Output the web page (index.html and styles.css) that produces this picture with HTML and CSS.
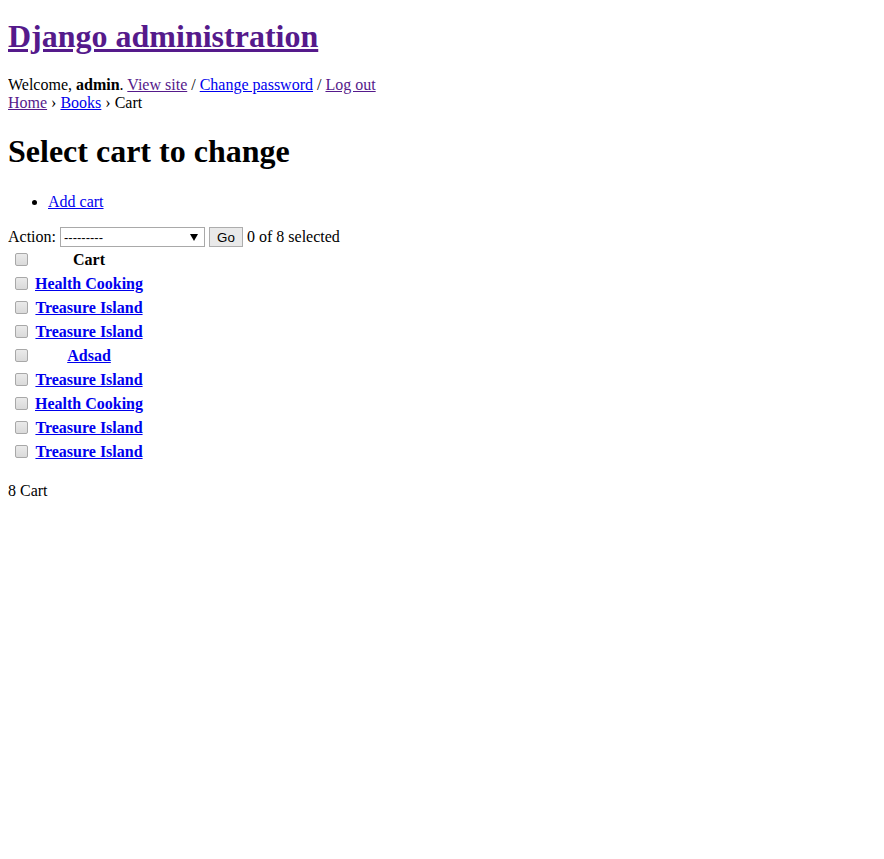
FILE: index.html
```html
<!DOCTYPE html>
<html lang="en">
<head>
<meta charset="utf-8">
<title>Select cart to change | Django site admin</title>
<link rel="stylesheet" href="styles.css">
</head>
<body class="page">
<div id="container">
  <div id="header">
    <div id="branding">
      <h1 id="site-name"><a class="visited" href="#admin">Django administration</a></h1>
    </div>
    <div id="user-tools">
      Welcome, <strong>admin</strong>. <a class="visited" href="#site">View site</a> / <a class="link" href="#pw">Change password</a> / <a class="visited" href="#logout">Log out</a>
    </div>
  </div>
  <div class="breadcrumbs">
    <a class="visited" href="#admin">Home</a> › <a class="link" href="#books">Books</a> › Cart
  </div>
  <div id="content">
    <h1 class="title">Select cart to change</h1>
    <div id="content-main">
      <ul class="object-tools"><li><a class="link" href="#add">Add cart</a></li></ul>
      <div class="module" id="changelist">
        <form id="changelist-form">
          <div class="actions">
            <label class="action-label">Action: <span class="select-wrap"><select class="action-select" name="action"><option value="" selected>---------</option><option value="delete_selected">Delete selected carts</option></select></span></label>
            <button type="button" class="go-button" title="Run the selected action">Go</button>
            <span class="action-counter">0 of 8 selected</span>
          </div>
          <div class="results">
            <table id="result_list">
              <thead>
                <tr>
                  <th class="action-checkbox-column"><input type="checkbox" class="cb"></th>
                  <th class="column-str">Cart</th>
                </tr>
              </thead>
              <tbody>
                <tr><td class="action-checkbox"><input type="checkbox" class="cb"></td><th class="field-str"><a class="link" href="#1">Health Cooking</a></th></tr>
                <tr><td class="action-checkbox"><input type="checkbox" class="cb"></td><th class="field-str"><a class="link" href="#2">Treasure Island</a></th></tr>
                <tr><td class="action-checkbox"><input type="checkbox" class="cb"></td><th class="field-str"><a class="link" href="#3">Treasure Island</a></th></tr>
                <tr><td class="action-checkbox"><input type="checkbox" class="cb"></td><th class="field-str"><a class="link" href="#4">Adsad</a></th></tr>
                <tr><td class="action-checkbox"><input type="checkbox" class="cb"></td><th class="field-str"><a class="link" href="#5">Treasure Island</a></th></tr>
                <tr><td class="action-checkbox"><input type="checkbox" class="cb"></td><th class="field-str"><a class="link" href="#6">Health Cooking</a></th></tr>
                <tr><td class="action-checkbox"><input type="checkbox" class="cb"></td><th class="field-str"><a class="link" href="#7">Treasure Island</a></th></tr>
                <tr><td class="action-checkbox"><input type="checkbox" class="cb"></td><th class="field-str"><a class="link" href="#8">Treasure Island</a></th></tr>
              </tbody>
            </table>
          </div>
          <p class="paginator">8 Cart</p>
        </form>
      </div>
    </div>
  </div>
</div>
</body>
</html>
```

FILE: styles.css
```css
.page {
  margin: 8px;
  font-family: "Liberation Serif", "Times New Roman", serif;
  font-size: 16px;
  color: #000;
  background: #fff;
}

.link { color: #0000ee; }
.visited { color: #551a8b; }

#site-name {
  font-size: 32px;
  margin: 10px 0 21px;
}

.title {
  font-size: 32px;
  margin: 21px 0 23px;
}

.object-tools {
  margin: 16px 0;
  padding-left: 40px;
}

.actions {
  height: 20px;
  display: flex;
  align-items: center;
  white-space: pre;
}

.action-label {
  display: inline-flex;
  align-items: center;
}

.select-wrap {
  position: relative;
  display: block;
}

.select-wrap::after {
  content: "";
  position: absolute;
  right: 7px;
  top: 7px;
  border-left: 4px solid transparent;
  border-right: 4px solid transparent;
  border-top: 7px solid #000;
  pointer-events: none;
}

.action-select {
  -webkit-appearance: none;
  appearance: none;
  display: block;
  box-sizing: border-box;
  font-family: "Liberation Sans", Arial, sans-serif;
  font-size: 13px;
  width: 145px;
  height: 20px;
  padding: 0 20px 0 3px;
  border: 1px solid #a9a9a9;
  border-radius: 0;
  background: #fff;
  color: #000;
  margin: 0;
}

.go-button {
  -webkit-appearance: none;
  appearance: none;
  box-sizing: border-box;
  font-family: "Liberation Sans", Arial, sans-serif;
  font-size: 13.33px;
  height: 20px;
  width: 34px;
  padding: 0;
  margin: 0 4px;
  border: 1px solid #adadad;
  background: #e9e9e9;
  color: #000;
}

.cb {
  -webkit-appearance: none;
  appearance: none;
  display: block;
  box-sizing: border-box;
  width: 13px;
  height: 13px;
  margin: 3px 3px 4px 4px;
  border: 1px solid #a8a8a8;
  border-radius: 2px;
  background: linear-gradient(#eaeaea, #dadada);
}

.paginator {
  margin: 17px 0 16px;
}
```
